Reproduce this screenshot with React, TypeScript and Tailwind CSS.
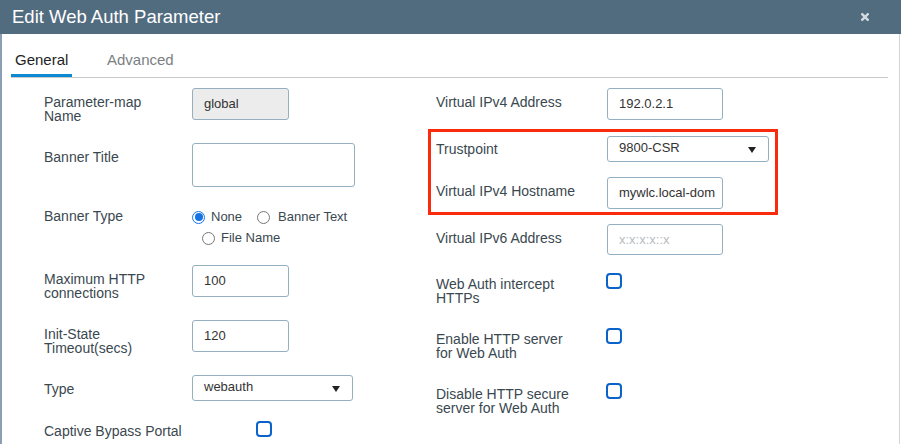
import React from "react";

const Label = ({ children, w, pt = "pt-[7px]" }: { children: React.ReactNode; w: string; pt?: string }) => (
  <div className={`${w} ${pt} shrink-0 text-[14px] leading-[14px] text-[#3a4850]`}>{children}</div>
);

const Input = ({ w, h, value, bg = "bg-white", placeholder = false }: { w: string; h: string; value?: string; bg?: string; placeholder?: boolean }) => (
  <div
    className={`${w} ${h} ${bg} shrink-0 border border-[#94b0c0] rounded-[3px] pl-[11px] flex items-center overflow-hidden whitespace-nowrap text-[13px] ${
      placeholder ? "text-[#b8bcc0] text-[12px]" : "text-[#333]"
    }`}
  >
    {value}
  </div>
);

const Select = ({ w, value }: { w: string; value: string }) => (
  <div className={`${w} h-[26px] shrink-0 border border-[#94b0c0] rounded-[3px] pl-[11px] pr-[12px] flex items-center justify-between text-[13px] text-[#333]`}>
    <span className="leading-[14px] -mt-[2px]">{value}</span>
    <svg width="8" height="6" viewBox="0 0 8 6" className="mt-[2px]">
      <path d="M0 0 L8 0 L4 6 Z" fill="#222" />
    </svg>
  </div>
);

const Checkbox = ({ cls }: { cls: string }) => (
  <div className={`${cls} w-[16px] h-[16px] shrink-0 border-2 border-[#0a63c9] rounded-[4px] bg-white`} />
);

const Radio = ({ checked }: { checked?: boolean }) =>
  checked ? (
    <div className="w-[13px] h-[13px] rounded-full border border-[#1673e6] flex items-center justify-center shrink-0">
      <div className="w-[8px] h-[8px] rounded-full bg-[#1673e6]" />
    </div>
  ) : (
    <div className="w-[13px] h-[13px] rounded-full border border-[#767676] bg-white shrink-0" />
  );

export default function App() {
  return (
    <div
      className="relative w-[902px] h-[444px] overflow-hidden bg-white"
      style={{ fontFamily: '"Liberation Sans", Arial, sans-serif' }}
    >
      <div className="w-[900px] h-[444px] border-l-2 border-l-[#8a9fb3] border-r border-r-[#cfd5da]">
        {/* Header */}
        <div className="h-[34px] bg-[#526c7f] flex items-center justify-between pl-[10px] pr-[32px] -ml-[2px] w-[901px]">
          <span className="text-white text-[18.5px] leading-[20px] pl-[2px] -mt-[1px]">Edit Web Auth Parameter</span>
          <svg width="8" height="8" viewBox="0 0 8 8">
            <path d="M1.2 1.2 L6.8 6.8 M6.8 1.2 L1.2 6.8" stroke="#d3dadf" strokeWidth="2.4" strokeLinecap="square" />
          </svg>
        </div>

        {/* Tabs */}
        <div className="ml-[9px] mr-[11px] h-[44px] border-b border-[#c9c9c9] flex items-end">
          <div className="w-[61px] pl-[4px] pb-[5px] border-b-[3px] border-[#0b8ad3] text-[15px] leading-[18px] text-[#1e1e1e]">
            General
          </div>
          <div className="ml-[35px] pb-[8px] text-[15px] leading-[18px] text-[#7b7f83]">Advanced</div>
        </div>

        {/* Body */}
        <div className="pl-[42px] mt-[10px] flex">
          {/* Left column */}
          <div className="w-[392px] flex flex-col">
            <div className="h-[55px] flex">
              <Label w="w-[148px]">
                Parameter-map
                <br />
                Name
              </Label>
              <Input w="w-[97px]" h="h-[32px]" value="global" bg="bg-[#ececec]" />
            </div>
            <div className="h-[59px] flex">
              <Label w="w-[148px]">Banner Title</Label>
              <Input w="w-[163px]" h="h-[44px]" />
            </div>
            <div className="h-[63px] flex pt-[7px]">
              <Label w="w-[148px]" pt="pt-0">
                Banner Type
              </Label>
              <div className="flex flex-col text-[13px] text-[#3a4850]">
                <div className="flex items-center h-[14px] mt-[1px]">
                  <Radio checked />
                  <span className="ml-[6px]">None</span>
                  <div className="ml-[15px]">
                    <Radio />
                  </div>
                  <span className="ml-[8px]">Banner Text</span>
                </div>
                <div className="flex items-center h-[14px] mt-[7px] pl-[10px]">
                  <Radio />
                  <span className="ml-[6px]">File Name</span>
                </div>
              </div>
            </div>
            <div className="h-[55px] flex">
              <Label w="w-[148px]">
                Maximum HTTP
                <br />
                connections
              </Label>
              <Input w="w-[97px]" h="h-[32px]" value="100" />
            </div>
            <div className="h-[55px] flex">
              <Label w="w-[148px]">
                Init-State
                <br />
                Timeout(secs)
              </Label>
              <Input w="w-[97px]" h="h-[32px]" value="120" />
            </div>
            <div className="h-[42px] flex">
              <Label w="w-[148px]">Type</Label>
              <Select w="w-[161px]" value="webauth" />
            </div>
            <div className="h-[30px] flex">
              <Label w="w-[148px]">Captive Bypass Portal</Label>
              <Checkbox cls="ml-[64px] mt-[4px]" />
            </div>
          </div>

          {/* Right column */}
          <div className="flex flex-col">
            <div className="h-[48px] flex">
              <Label w="w-[171px]">Virtual IPv4 Address</Label>
              <Input w="w-[116px]" h="h-[32px]" value="192.0.2.1" />
            </div>
            <div className="h-[41px] flex">
              <Label w="w-[171px]" pt="pt-[6px]">
                Trustpoint
              </Label>
              <Select w="w-[162px]" value="9800-CSR" />
            </div>
            <div className="h-[47px] flex">
              <Label w="w-[171px]">Virtual IPv4 Hostname</Label>
              <Input w="w-[116px]" h="h-[32px]" value="mywlc.local-dom" />
            </div>
            <div className="h-[46px] flex">
              <Label w="w-[171px]">Virtual IPv6 Address</Label>
              <Input w="w-[116px]" h="h-[31px]" value="x:x:x:x::x" placeholder />
            </div>
            <div className="h-[55px] flex">
              <Label w="w-[170px]">
                Web Auth intercept
                <br />
                HTTPs
              </Label>
              <Checkbox cls="mt-[3px]" />
            </div>
            <div className="h-[55px] flex">
              <Label w="w-[170px]">
                Enable HTTP server
                <br />
                for Web Auth
              </Label>
              <Checkbox cls="mt-[3px]" />
            </div>
            <div className="h-[55px] flex">
              <Label w="w-[170px]">
                Disable HTTP secure
                <br />
                server for Web Auth
              </Label>
              <Checkbox cls="mt-[3px]" />
            </div>
          </div>
        </div>
      </div>

      {/* Red highlight annotation */}
      <div className="absolute left-[428px] top-[129px] w-[350px] h-[86px] border-[3px] border-[#fa2a0c] pointer-events-none" />
    </div>
  );
}
